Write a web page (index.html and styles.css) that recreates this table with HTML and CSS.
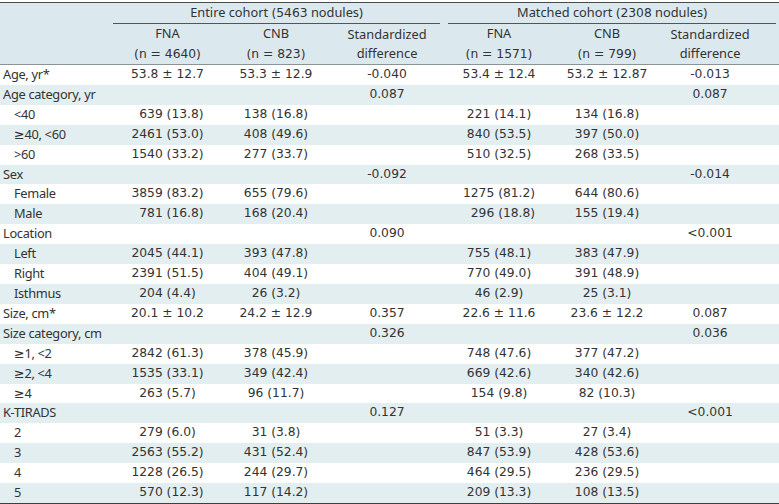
FILE: index.html
```html
<!DOCTYPE html>
<html lang="en">
<head>
<meta charset="utf-8">
<title>Baseline characteristics</title>
<link rel="stylesheet" href="styles.css">
</head>
<body>
<table class="tbl">
  <colgroup>
    <col class="c-label">
    <col class="c-fna1">
    <col class="c-cnb1">
    <col class="c-sd1">
    <col class="c-fna2">
    <col class="c-cnb2">
    <col class="c-sd2">
  </colgroup>
  <thead>
    <tr class="h1">
      <th></th>
      <th colspan="3" class="grp grp1"><span class="grp-text">Entire cohort <span class="num">(5463</span> nodules)</span></th>
      <th colspan="3" class="grp grp2"><span class="grp-text">Matched cohort <span class="num">(2308</span> nodules)</span></th>
    </tr>
    <tr class="h2">
      <th></th>
      <th>FNA<br><span class="num">(n = 4640)</span></th>
      <th>CNB<br><span class="num">(n = 823)</span></th>
      <th>Standardized<br>difference</th>
      <th>FNA<br><span class="num">(n = 1571)</span></th>
      <th>CNB<br><span class="num">(n = 799)</span></th>
      <th class="last">Standardized<br>difference</th>
    </tr>
  </thead>
  <tbody>
    <tr><td>Age, yr*</td><td>53.8 ± 12.7</td><td>53.3 ± 12.9</td><td>-0.040</td><td>53.4 ± 12.4</td><td>53.2 ± 12.87</td><td class="last">-0.013</td></tr>
    <tr><td>Age category, yr</td><td></td><td></td><td>0.087</td><td></td><td></td><td class="last">0.087</td></tr>
    <tr><td class="sub">&lt;40</td><td>&#8199;639 (13.8)</td><td>138 (16.8)</td><td></td><td>221 (14.1)</td><td>134 (16.8)</td><td class="last"></td></tr>
    <tr><td class="sub">≥40, &lt;60</td><td>2461 (53.0)</td><td>408 (49.6)</td><td></td><td>840 (53.5)</td><td>397 (50.0)</td><td class="last"></td></tr>
    <tr><td class="sub">&gt;60</td><td>1540 (33.2)</td><td>277 (33.7)</td><td></td><td>510 (32.5)</td><td>268 (33.5)</td><td class="last"></td></tr>
    <tr><td>Sex</td><td></td><td></td><td>-0.092</td><td></td><td></td><td class="last">-0.014</td></tr>
    <tr><td class="sub">Female</td><td>3859 (83.2)</td><td>655 (79.6)</td><td></td><td>1275 (81.2)</td><td>644 (80.6)</td><td class="last"></td></tr>
    <tr><td class="sub">Male</td><td>&#8199;781 (16.8)</td><td>168 (20.4)</td><td></td><td>&#8199;296 (18.8)</td><td>155 (19.4)</td><td class="last"></td></tr>
    <tr><td>Location</td><td></td><td></td><td>0.090</td><td></td><td></td><td class="last">&lt;0.001</td></tr>
    <tr><td class="sub">Left</td><td>2045 (44.1)</td><td>393 (47.8)</td><td></td><td>755 (48.1)</td><td>383 (47.9)</td><td class="last"></td></tr>
    <tr><td class="sub">Right</td><td>2391 (51.5)</td><td>404 (49.1)</td><td></td><td>770 (49.0)</td><td>391 (48.9)</td><td class="last"></td></tr>
    <tr><td class="sub">Isthmus</td><td>204 (4.4)</td><td>26 (3.2)</td><td></td><td>46 (2.9)</td><td>25 (3.1)</td><td class="last"></td></tr>
    <tr><td>Size, cm*</td><td>20.1 ± 10.2</td><td>24.2 ± 12.9</td><td>0.357</td><td>22.6 ± 11.6</td><td>23.6 ± 12.2</td><td class="last">0.087</td></tr>
    <tr><td>Size category, cm</td><td></td><td></td><td>0.326</td><td></td><td></td><td class="last">0.036</td></tr>
    <tr><td class="sub">≥1, &lt;2</td><td>2842 (61.3)</td><td>378 (45.9)</td><td></td><td>748 (47.6)</td><td>377 (47.2)</td><td class="last"></td></tr>
    <tr><td class="sub">≥2, &lt;4</td><td>1535 (33.1)</td><td>349 (42.4)</td><td></td><td>669 (42.6)</td><td>340 (42.6)</td><td class="last"></td></tr>
    <tr><td class="sub">≥4</td><td>263 (5.7)</td><td>96 (11.7)</td><td></td><td>154 (9.8)</td><td>82 (10.3)</td><td class="last"></td></tr>
    <tr><td>K-TIRADS</td><td></td><td></td><td>0.127</td><td></td><td></td><td class="last">&lt;0.001</td></tr>
    <tr><td class="sub">2</td><td>279 (6.0)</td><td>31 (3.8)</td><td></td><td>51 (3.3)</td><td>27 (3.4)</td><td class="last"></td></tr>
    <tr><td class="sub">3</td><td>2563 (55.2)</td><td>431 (52.4)</td><td></td><td>847 (53.9)</td><td>428 (53.6)</td><td class="last"></td></tr>
    <tr><td class="sub">4</td><td>1228 (26.5)</td><td>244 (29.7)</td><td></td><td>464 (29.5)</td><td>236 (29.5)</td><td class="last"></td></tr>
    <tr><td class="sub">5</td><td>&#8199;570 (12.3)</td><td>117 (14.2)</td><td></td><td>209 (13.3)</td><td>108 (13.5)</td><td class="last"></td></tr>
  </tbody>
</table>
</body>
</html>
```
FILE: styles.css
```css
html, body {
  margin: 0;
  padding: 0;
  background: #ffffff;
}

body {
  padding-top: 2px;
  font-family: "Noto Sans", "DejaVu Sans", sans-serif;
  font-size: 12.8px;
  color: #333333;
}

.tbl {
  width: 779px;
  border-collapse: collapse;
  table-layout: fixed;
  border-top: 1px solid #4a4a4a;
}

.c-label { width: 113px; }
.c-fna1 { width: 109px; }
.c-cnb1 { width: 108px; }
.c-sd1 { width: 114px; }
.c-fna2 { width: 110px; }
.c-cnb2 { width: 106px; }
.c-sd2 { width: 119px; }

.tbl th,
.tbl td {
  padding: 0;
  font-weight: normal;
  text-align: center;
  white-space: nowrap;
}

.tbl td {
  line-height: 19.9px;
  height: 19.9px;
}

.tbl tbody tr:last-child td {
  border-bottom: 2px solid #3f3f3f;
}

.h1 th {
  height: 19px;
  line-height: 19px;
  vertical-align: top;
}

.h2 th {
  line-height: 19.5px;
  height: 39px;
}

.tbl td,
.num {
  font-family: "DejaVu Sans", "Noto Sans", sans-serif;
  font-size: 12.3px;
}

.tbl td:first-child {
  font-family: "Noto Sans", "DejaVu Sans", sans-serif;
  font-size: 12.8px;
  letter-spacing: -0.3px;
  text-align: left;
  padding-left: 3px;
}

.tbl td.sub {
  padding-left: 14px;
}

.tbl thead tr {
  background: #dbe9ee;
}

.tbl thead {
  border-bottom: 1px solid #8a9498;
}

.grp-text {
  display: block;
  border-bottom: 1px solid #555555;
}

.grp1 .grp-text {
  margin-right: 4px;
}

.grp2 .grp-text {
  margin-left: 4px;
  margin-right: 3px;
}

.tbl .last {
  padding-right: 19px;
}

.tbl tbody tr:nth-child(even) {
  background: #e2eef0;
}
```
